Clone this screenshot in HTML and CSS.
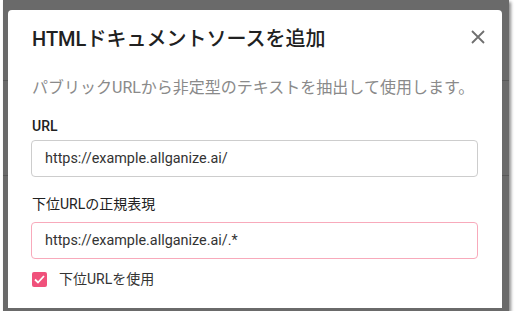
FILE: index.html
```html
<!DOCTYPE html>
<html lang="ja">
<head>
    <meta charset="UTF-8">
    <meta name="viewport" content="width=device-width, initial-scale=1.0">
    <title>HTMLドキュメントソースを追加</title>
    <link rel="stylesheet" href="styles.css">
</head>
<body>
    <div class="backdrop">
        <div class="modal">
            <div class="modal-header">
                <h2>HTMLドキュメントソースを追加</h2>
                <button class="close-btn" aria-label="close">
                    <svg width="14" height="14" viewBox="0 0 14 14">
                        <path d="M1 1L13 13M13 1L1 13" stroke="#6f6f6f" stroke-width="1.8" fill="none"/>
                    </svg>
                </button>
            </div>
            <p class="description">パブリックURLから非定型のテキストを抽出して使用します。</p>
            <div class="field field-url">
                <label>URL</label>
                <input type="text" value="https://example.allganize.ai/">
            </div>
            <div class="field field-regex">
                <label>下位URLの正規表現</label>
                <input type="text" class="focused" value="https://example.allganize.ai/.*">
            </div>
            <label class="check-row">
                <span class="checkbox">
                    <svg width="11" height="9" viewBox="0 0 11 9">
                        <path d="M1 4.5L4 7.5L10 1" stroke="#fff" stroke-width="1.8" fill="none"/>
                    </svg>
                </span>
                下位URLを使用
            </label>
        </div>
    </div>
</body>
</html>
```

FILE: styles.css
```css
* {
    box-sizing: border-box;
}
body {
    margin: 0;
    padding: 0;
    background: #fff;
    font-family: Roboto, "Noto Sans CJK JP", sans-serif;
    overflow: hidden;
}
.backdrop {
    width: 506px;
    height: 311px;
    margin-left: 3px;
    padding: 10px 7px 0 5px;
    background:
        linear-gradient(#585858, #585858) 0 80px / 100% 1px no-repeat,
        linear-gradient(#585858, #585858) 0 175px / 100% 1px no-repeat,
        #6a6a6a;
    box-shadow: 2px 2px 3px rgba(0, 0, 0, 0.45);
    overflow: hidden;
}
.modal {
    height: 298px;
    background: #fff;
    border-radius: 4px 4px 0 0;
    padding: 16px 24px 0 23px;
}
.modal-header {
    display: flex;
    justify-content: space-between;
    align-items: center;
}
h2 {
    margin: 0;
    padding-left: 1px;
    font-size: 20px;
    line-height: 26px;
    font-weight: 500;
    color: #212121;
}
.close-btn {
    border: none;
    background: none;
    padding: 0;
    margin-right: -8px;
    margin-top: -4px;
    width: 16px;
    height: 16px;
    display: flex;
    align-items: center;
    justify-content: center;
    cursor: pointer;
}
.description {
    margin: 25px 0 0;
    padding-left: 1px;
    font-size: 16px;
    line-height: 22px;
    color: #8a8a8a;
}
.field {
    display: flex;
    flex-direction: column;
}
.field label {
    font-size: 14px;
    line-height: 20px;
    font-weight: 500;
    color: #212121;
    padding-left: 1px;
}
.field-url {
    margin-top: 17px;
}
.field-url label {
    margin-bottom: 4px;
}
.field-regex {
    margin-top: 17px;
}
.field-regex label {
    margin-bottom: 8px;
    font-weight: 400;
}
input {
    width: 100%;
    height: 37px;
    padding: 0 13px;
    border: 1px solid #cdcdcd;
    border-radius: 4px;
    font-family: Roboto, "Noto Sans CJK JP", sans-serif;
    font-size: 14.4px;
    color: #333;
    outline: none;
}
input.focused {
    border: 1.5px solid #f8aabb;
}
.check-row {
    display: flex;
    align-items: center;
    gap: 12px;
    margin-top: 10px;
    padding-left: 1px;
    font-size: 14px;
    line-height: 20px;
    color: #333;
}
.checkbox {
    width: 15px;
    height: 15px;
    border-radius: 2px;
    background: #f0517b;
    display: flex;
    align-items: center;
    justify-content: center;
}
```
